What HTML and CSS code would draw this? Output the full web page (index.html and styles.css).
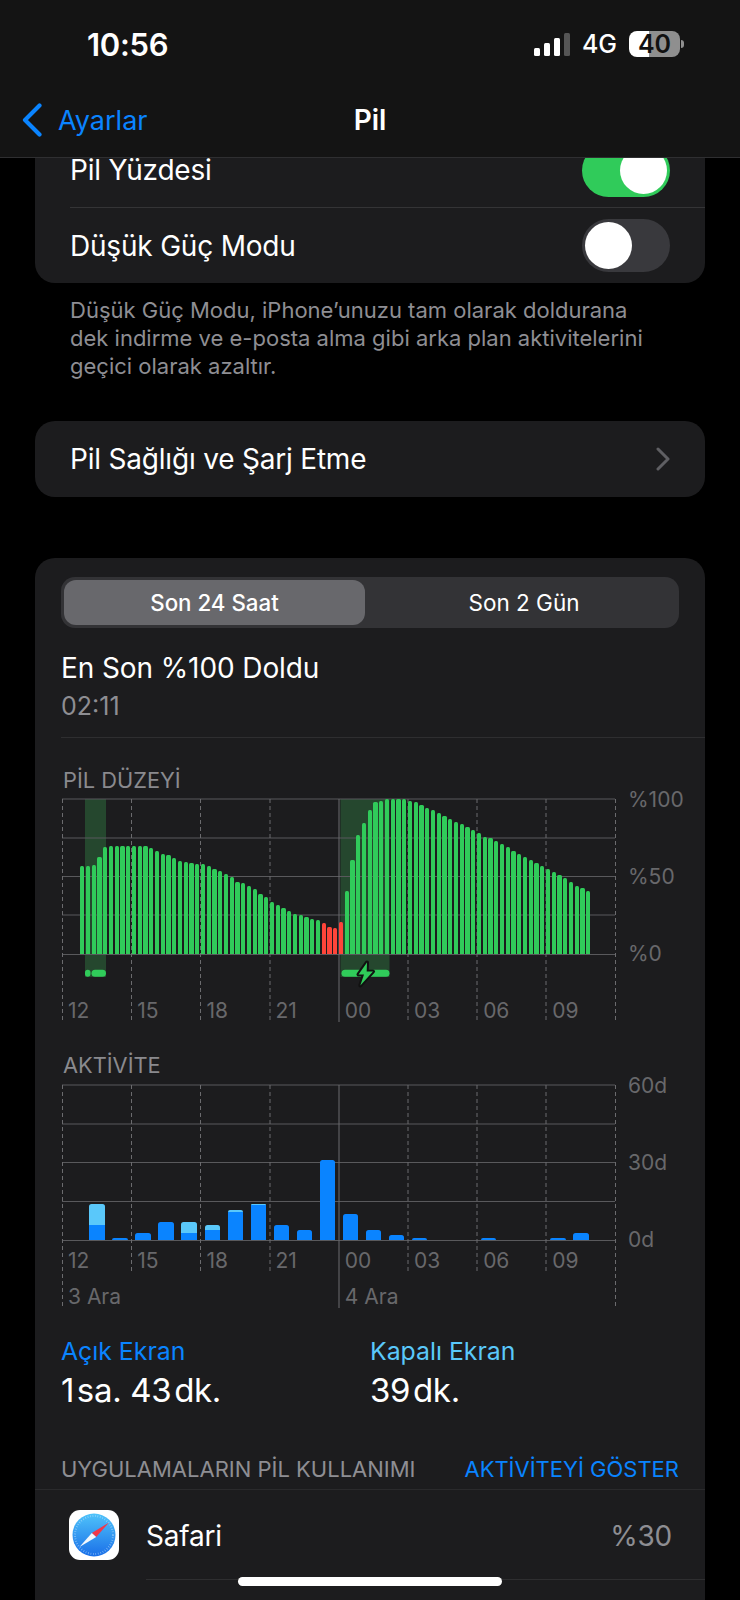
FILE: index.html
```html
<!DOCTYPE html>
<html lang="tr">
<head>
<meta charset="utf-8">
<title>Pil</title>
<link rel="stylesheet" href="styles.css">
</head>
<body>
<div class="screen">
  <header class="top">
    <div class="status">
      <span class="clock">10:56</span>
      <div class="status-right">
        <div class="signal"><i class="s1"></i><i class="s2"></i><i class="s3"></i><i class="s4"></i></div>
        <span class="net">4G</span>
        <div class="battery"><span class="battery-body">40</span><i class="battery-nub"></i></div>
      </div>
    </div>
    <nav class="nav">
      <div class="back">
        <svg class="back-icon" width="22" height="34" viewBox="0 0 22 34"><path d="M18.5 2.5 4 17l14.500 14.500" fill="none" stroke="#0a84ff" stroke-width="4.200" stroke-linecap="round" stroke-linejoin="round"/></svg>
        <span>Ayarlar</span>
      </div>
      <div class="nav-title">Pil</div>
    </nav>
  </header>

  <main class="content">
    <section class="card">
      <div class="row first-row">
        <span>Pil Yüzdesi</span>
        <span class="toggle on"><i></i></span>
      </div>
      <div class="row divided">
        <span>Düşük Güç Modu</span>
        <span class="toggle"><i></i></span>
      </div>
    </section>
    <p class="note">Düşük Güç Modu, iPhone’unuzu tam olarak doldurana<br>dek indirme ve e-posta alma gibi arka plan aktivitelerini<br>geçici olarak azaltır.</p>

    <section class="card link-card">
      <span>Pil Sağlığı ve Şarj Etme</span>
      <svg width="14" height="24" viewBox="0 0 14 24"><path d="M2 2l10 10L2 22" fill="none" stroke="#5f5f63" stroke-width="3" stroke-linecap="round" stroke-linejoin="round"/></svg>
    </section>

    <section class="card usage">
      <div class="segment">
        <div class="seg-item selected">Son 24 Saat</div>
        <div class="seg-item other">Son 2 Gün</div>
      </div>
      <div class="charged">
        <div class="charged-title">En Son %100 Doldu</div>
        <div class="charged-time">02:11</div>
      </div>

      <h3 class="chart-title first">PİL DÜZEYİ</h3>
      <div class="stack battery-chart">
        <svg class="grid-art" width="670" height="224" viewBox="35 798 670 224">
          <rect class="band" x="85" y="799" width="21" height="178"/>
          <rect class="band" x="340.500" y="799" width="49" height="178"/>
          <path class="hline" d="M62 799H615M62 838H615M62 876.500H615M62 915H615M62 954.500H615"/>
          <path class="dash" d="M62.500 799V1021M131.500 799V1021M200.500 799V1021M270 799V1021M408 799V1021M477 799V1021M546 799V1021M615.500 799V1021"/>
          <path class="solid" d="M339 799V1022"/>
          <rect class="pill" x="85" y="969.800" width="5.500" height="7" rx="2.800"/>
          <rect class="pill" x="91.500" y="969.800" width="14.500" height="7" rx="3.500"/>
          <rect class="pill" x="341.500" y="969.800" width="48" height="7" rx="3.500"/>
          <path class="bolt" d="M367 962.500 358.500 974.500h5.500L360.300 985.500 373 971.500h-6.300z"/>
        </svg>
        <div class="level-bars">
          <i style="height:88px"></i><i style="height:88px"></i><i style="height:89.300px"></i><i style="height:97.300px"></i><i style="height:106.700px"></i>
          <i style="height:108px"></i><i style="height:108px"></i><i style="height:108px"></i><i style="height:108px"></i><i style="height:108px"></i><i style="height:108px"></i><i style="height:108px"></i>
          <i style="height:106.300px"></i><i style="height:103.300px"></i><i style="height:100.300px"></i><i style="height:98.700px"></i><i style="height:95.700px"></i><i style="height:92.700px"></i><i style="height:91.700px"></i><i style="height:91px"></i><i style="height:90.300px"></i><i style="height:89.700px"></i><i style="height:88px"></i><i style="height:84.700px"></i><i style="height:83px"></i><i style="height:80px"></i><i style="height:77px"></i><i style="height:72.300px"></i><i style="height:70.700px"></i><i style="height:67.700px"></i><i style="height:64.700px"></i><i style="height:60px"></i><i style="height:57px"></i><i style="height:52px"></i><i style="height:49px"></i><i style="height:46px"></i><i style="height:43px"></i><i style="height:39.700px"></i><i style="height:38.700px"></i><i style="height:36.700px"></i><i style="height:35px"></i><i style="height:33.700px"></i>
          <i class="low" style="height:30.700px"></i><i class="low" style="height:27.300px"></i><i class="low" style="height:26px"></i><i class="low" style="height:32px"></i>
          <i style="height:63.300px"></i><i style="height:94px"></i><i style="height:119px"></i><i style="height:131.300px"></i><i style="height:144px"></i><i style="height:151.700px"></i><i style="height:153.300px"></i>
          <i style="height:155px"></i><i style="height:155px"></i><i style="height:155px"></i><i style="height:155px"></i>
          <i style="height:153.300px"></i><i style="height:151.700px"></i><i style="height:148.700px"></i><i style="height:145.700px"></i><i style="height:144px"></i><i style="height:140.700px"></i><i style="height:137.700px"></i><i style="height:134.700px"></i><i style="height:131.700px"></i><i style="height:130px"></i><i style="height:126.700px"></i><i style="height:124px"></i><i style="height:120.700px"></i><i style="height:117.300px"></i><i style="height:116px"></i><i style="height:112.700px"></i><i style="height:109.700px"></i><i style="height:106.700px"></i><i style="height:103.300px"></i><i style="height:100.300px"></i><i style="height:97.300px"></i><i style="height:94.300px"></i><i style="height:91px"></i><i style="height:88px"></i><i style="height:85px"></i><i style="height:81.700px"></i><i style="height:78.700px"></i><i style="height:75.700px"></i><i style="height:72.300px"></i><i style="height:67.700px"></i><i style="height:66.300px"></i><i style="height:63px"></i>
        </div>
        <div class="y-axis level-y"><span>%100</span><span>%50</span><span>%0</span></div>
        <div class="x-axis level-x"><span>12</span><span>15</span><span>18</span><span>21</span><span>00</span><span>03</span><span>06</span><span>09</span></div>
      </div>

      <h3 class="chart-title second">AKTİVİTE</h3>
      <div class="stack activity-chart">
        <svg class="grid-art" width="670" height="224" viewBox="35 1084 670 224">
          <path class="hline" d="M62 1085H615M62 1124H615M62 1162.500H615M62 1201.500H615M62 1240.500H615"/>
          <path class="dash" d="M62.500 1085V1307M131.500 1085V1272M200.500 1085V1272M270 1085V1272M408 1085V1272M477 1085V1272M546 1085V1272M615.500 1085V1307"/>
          <path class="solid" d="M339 1085V1308"/>
        </svg>
        <div class="activity-bars">
          <div class="act"><i class="screen-on" style="height:15.300px"></i><i class="screen-off" style="height:21px"></i></div>
          <div class="act"><i class="screen-on" style="height:2.300px"></i></div>
          <div class="act"><i class="screen-on" style="height:7.300px"></i></div>
          <div class="act"><i class="screen-on" style="height:18px"></i></div>
          <div class="act"><i class="screen-on" style="height:7.300px"></i><i class="screen-off" style="height:10.300px"></i></div>
          <div class="act"><i class="screen-on" style="height:10.300px"></i><i class="screen-off" style="height:4.700px"></i></div>
          <div class="act"><i class="screen-on" style="height:28px"></i><i class="screen-off" style="height:1.700px"></i></div>
          <div class="act"><i class="screen-on" style="height:35px"></i><i class="screen-off" style="height:1.300px"></i></div>
          <div class="act"><i class="screen-on" style="height:15.300px"></i></div>
          <div class="act"><i class="screen-on" style="height:10.300px"></i></div>
          <div class="act"><i class="screen-on" style="height:80px"></i></div>
          <div class="act"><i class="screen-on" style="height:26px"></i></div>
          <div class="act"><i class="screen-on" style="height:10.300px"></i></div>
          <div class="act"><i class="screen-on" style="height:5.300px"></i></div>
          <div class="act"><i class="screen-on" style="height:2.300px"></i></div>
          <div class="act"></div>
          <div class="act"></div>
          <div class="act"><i class="screen-on" style="height:2.300px"></i></div>
          <div class="act"></div>
          <div class="act"></div>
          <div class="act"><i class="screen-on" style="height:2.300px"></i></div>
          <div class="act"><i class="screen-on" style="height:7.300px"></i></div>
        </div>
        <div class="y-axis activity-y"><span>60d</span><span>30d</span><span>0d</span></div>
        <div class="x-axis activity-x"><span>12</span><span>15</span><span>18</span><span>21</span><span>00</span><span>03</span><span>06</span><span>09</span></div>
        <div class="dates"><span>3 Ara</span><span>4 Ara</span></div>
      </div>

      <div class="totals">
        <div class="total">
          <div class="total-label on-label">Açık Ekran</div>
          <div class="total-value">1&#8202;sa. 43&#8202;dk.</div>
        </div>
        <div class="total">
          <div class="total-label off-label">Kapalı Ekran</div>
          <div class="total-value">39&#8202;dk.</div>
        </div>
      </div>

      <div class="apps-head">
        <span class="apps-title">UYGULAMALARIN PİL KULLANIMI</span>
        <span class="apps-link">AKTİVİTEYİ GÖSTER</span>
      </div>
      <div class="app-row">
        <svg class="safari" width="50" height="50" viewBox="0 0 50 50">
          <defs>
            <linearGradient id="safariBlue" x1="0" y1="0" x2="0" y2="1">
              <stop offset="0" stop-color="#4fc3fa"/>
              <stop offset="1" stop-color="#1a6fe8"/>
            </linearGradient>
          </defs>
          <rect width="50" height="50" rx="11" fill="#fff"/>
          <circle cx="25" cy="25" r="21.500" fill="url(#safariBlue)"/>
          <circle cx="25" cy="25" r="19" fill="none" stroke="#cfeaff" stroke-opacity=".55" stroke-width="2" stroke-dasharray=".7 1.800"/>
          <path d="M40 12.500 22.800 23 27.200 27z" fill="#f0384a"/>
          <path d="M10.500 37 22.800 23 27.200 27z" fill="#f4f8fc"/>
        </svg>
        <div class="app-info">
          <span>Safari</span>
          <span class="app-pct">%30</span>
        </div>
      </div>
    </section>
  </main>
  <div class="home-bar"></div>
</div>
</body>
</html>
```

FILE: styles.css
```css
* { box-sizing: border-box; }
html, body { margin: 0; padding: 0; background: #000; }
body { font-family: Inter, "Noto Sans", sans-serif; color: #fff; }
.screen { position: relative; width: 740px; height: 1600px; overflow: hidden; background: #000; }

/* header */
.top { position: absolute; top: 0; left: 0; right: 0; height: 158px; background: #141414; border-bottom: 1px solid #2f2f31; z-index: 2; }
.status { display: flex; justify-content: space-between; align-items: center; height: 88px; padding: 0 56px 0 87px; }
.clock { font-size: 31px; font-weight: 600; letter-spacing: -.3px; }
.status-right { display: flex; align-items: center; }
.signal { display: flex; align-items: flex-end; gap: 4px; height: 24px; margin-right: 12px; }
.signal i { display: block; width: 6px; border-radius: 1.500px; background: #fff; }
.signal .s1 { height: 8px; }
.signal .s2 { height: 13px; }
.signal .s3 { height: 18px; }
.signal .s4 { height: 23px; background: #555; }
.net { font-size: 25px; font-weight: 500; margin-right: 12px; }
.battery { display: flex; align-items: center; gap: 1px; }
.battery-body { display: block; width: 51px; height: 26px; border-radius: 8px; background: linear-gradient(90deg, #fff 0 20px, #8f8f8f 20px); color: #111; font-size: 25px; font-weight: 600; line-height: 26px; text-align: center; }
.battery-nub { display: block; width: 3px; height: 8px; border-radius: 0 3px 3px 0; background: #8f8f8f; }
.nav { position: relative; display: flex; align-items: center; justify-content: center; height: 64px; }
.back { position: absolute; left: 22px; top: 0; height: 64px; display: flex; align-items: center; gap: 15px; color: #0a84ff; font-size: 27px; }
.back-icon { display: block; margin-left: -1px; }
.nav-title { font-size: 28px; font-weight: 600; }

/* content */
.content { padding: 133px 35px 0; }
.card { background: #1c1c1e; border-radius: 20px; }
.row { display: flex; justify-content: space-between; align-items: center; height: 76px; margin-left: 35px; padding-right: 35px; font-size: 28px; letter-spacing: -.2px; }
.row.first-row { height: 74px; }
.row.divided { border-top: 1px solid #343436; }
.toggle { display: block; position: relative; width: 88px; height: 53px; border-radius: 27px; background: #39393d; }
.toggle i { position: absolute; top: 3px; left: 3px; width: 47px; height: 47px; border-radius: 50%; background: #fff; }
.toggle.on { background: #30cb5a; }
.toggle.on i { left: 38px; }
.note { margin: 13px 0 0; padding: 0 35px; font-size: 22px; line-height: 28px; color: #8e8e93; }
.link-card { display: flex; justify-content: space-between; align-items: center; height: 76px; margin-top: 41px; padding: 0 35px; font-size: 28px; letter-spacing: -.2px; }
.usage { margin-top: 61px; height: 1100px; padding-top: 19px; border-radius: 20px; }

.segment { display: flex; height: 51px; margin: 0 26px; padding: 3px; border-radius: 14px; background: #333336; }
.seg-item { display: flex; align-items: center; justify-content: center; font-size: 22.300px; font-weight: 500; flex: 1; }
.seg-item.selected { flex: 0 0 301px; background: #68686c; border-radius: 12px; }
.seg-item.other { font-weight: 400; font-size: 22.500px; padding-left: 7px; }
.charged { margin-top: 21px; margin-left: 26px; padding-bottom: 13px; border-bottom: 1px solid #2e2e30; }
.charged-title { font-size: 28px; line-height: 39px; letter-spacing: -.1px; }
.charged-time { font-size: 25px; line-height: 36px; color: #8e8e93; }

.chart-title { margin: 0 0 0 28px; font-size: 21.800px; font-weight: 400; line-height: 24px; color: #8a8a8e; }
.chart-title.first { margin-top: 30px; }
.chart-title.second { margin-top: 31px; }
.stack { display: grid; width: 670px; height: 224px; margin-top: 6px; }
.activity-chart { margin-top: 7px; }
.stack > * { grid-area: 1 / 1; }
.grid-art { display: block; }
.band { fill: #25472e; }
.hline { fill: none; stroke: #59595c; stroke-width: 1; }
.dash { fill: none; stroke: #6b6b6e; stroke-width: 1; stroke-dasharray: 4 3; }
.solid { fill: none; stroke: #6b6b6e; stroke-width: 1; }
.pill { fill: #30cb5a; }
.bolt { fill: #30cb5a; stroke: #111; stroke-width: 4; paint-order: stroke; stroke-linejoin: round; }

.level-bars { display: flex; align-items: flex-end; gap: 1.467px; height: 156px; padding-left: 45.200px; }
.level-bars i { display: block; flex: 0 0 4.300px; background: #30cb5a; border-radius: 1.500px 1.500px 0 0; }
.level-bars i.low { background: #ff453a; }

.y-axis { display: flex; flex-direction: column; justify-content: space-between; align-self: start; margin: -10px 0 0 593px; height: 178px; font-size: 21px; line-height: 24px; color: #68686b; }
.x-axis { display: grid; grid-template-columns: repeat(8, 69.200px); align-self: start; padding-left: 33px; font-size: 21px; line-height: 24px; color: #68686b; }
.level-x { margin-top: 201px; }
.activity-x { margin-top: 165px; }
.activity-bars { display: flex; align-items: flex-end; gap: 7.670px; height: 156px; padding-left: 54.300px; }
.act { display: flex; flex-direction: column-reverse; flex: 0 0 15.400px; }
.act i { display: block; }
.act i:last-child { border-radius: 2.500px 2.500px 0 0; }
.screen-on { background: #0a84ff; }
.screen-off { background: #5ac8fa; }
.dates { display: grid; grid-template-columns: 276.800px auto; align-self: start; margin-top: 201px; padding-left: 33px; font-size: 21px; line-height: 24px; color: #68686b; }

.totals { display: grid; grid-template-columns: 309px auto; margin-top: 25px; padding-left: 26px; }
.total-label { font-size: 24.800px; line-height: 36px; }
.on-label { color: #0a84ff; }
.off-label { color: #5ac8fa; }
.total-value { font-size: 33px; line-height: 42px; letter-spacing: -.3px; }
.apps-head { display: flex; justify-content: space-between; align-items: center; margin-top: 38px; padding: 0 26px 0 26px; height: 40px; font-size: 22px; color: #8e8e93; }
.apps-link { color: #0a84ff; }
.app-row { display: flex; align-items: flex-start; height: 120px; padding: 20px 0 0 34px; border-top: 1px solid #2a2a2c; }
.safari { display: block; flex: none; }
.app-info { flex: 1; display: flex; justify-content: space-between; align-items: center; height: 90px; margin: -20px 0 0 27px; padding: 2px 33px 0 0; font-size: 28px; letter-spacing: -.2px; border-bottom: 1px solid #2e2e30; }
.app-pct { color: #8e8e93; }
.home-bar { position: absolute; left: 238px; top: 1577px; width: 264px; height: 9px; border-radius: 5px; background: #fff; z-index: 3; }
```
